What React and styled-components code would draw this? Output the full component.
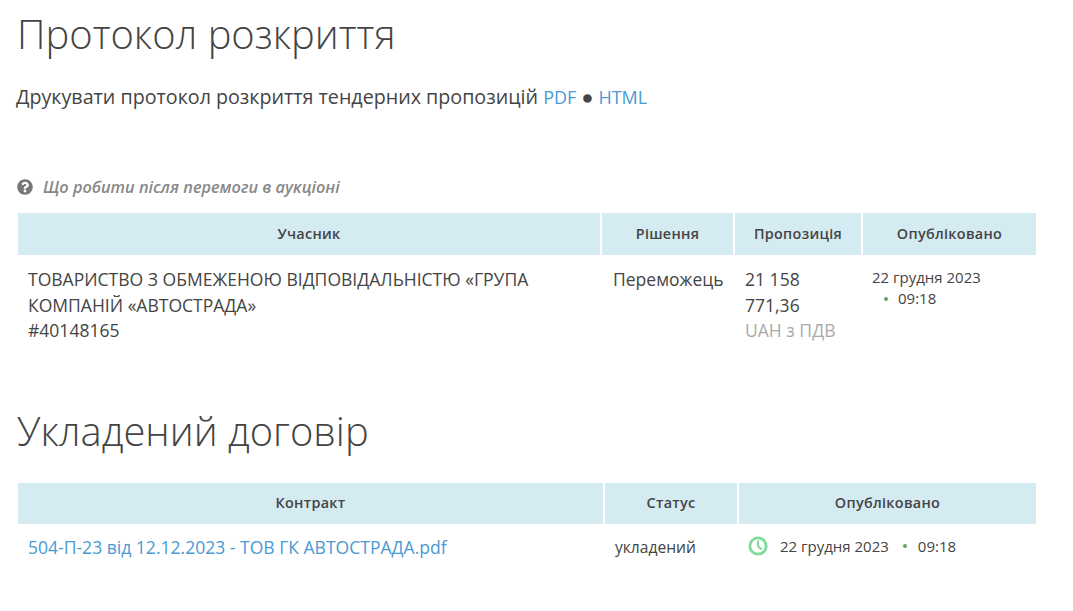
import styled, { createGlobalStyle } from "styled-components";
import { FaQuestionCircle } from "react-icons/fa";

const GlobalStyle = createGlobalStyle`
  html, body {
    margin: 0;
    padding: 0;
    background: #fff;
    color: #444;
    font-family: "Open Sans", sans-serif;
  }
`;

const Page = styled.div`
  width: 1073px;
  height: 611px;
  overflow: hidden;
  box-sizing: border-box;
  padding: 9px 37px 0 17px;
`;

const Heading = styled.h1`
  margin: 0;
  font-size: 39.9px;
  line-height: 50px;
  font-weight: 300;
  color: #444;
`;

const PrintLine = styled.p`
  margin: 25px 0 0 -1px;
  font-size: 19.68px;
  line-height: 25px;
  color: #444;
`;

const Link = styled.a`
  color: #4a9ad4;
  text-decoration: none;
`;

const PrintLink = styled(Link)`
  font-size: 18px;
`;

const Hint = styled.div`
  display: flex;
  align-items: center;
  gap: 10px;
  margin: 66px 0 0;
  font-size: 16.3px;
  line-height: 22px;
  font-style: italic;
  font-weight: 600;
  color: #888;

  svg {
    color: #777;
    font-size: 16px;
    flex: none;
  }
`;

const Table = styled.div`
  margin: 15px 0 0 1px;
  width: 1018px;
  display: grid;
  grid-template-columns: ${(props) => props.$columns};
  column-gap: 2px;
`;

const HeadCell = styled.div`
  background: #d5ebf2;
  height: ${(props) => props.$height}px;
  display: flex;
  align-items: center;
  justify-content: center;
  font-size: 14.4px;
  line-height: 20px;
  font-weight: 600;
  letter-spacing: 0.3px;
  color: #444;
`;

const Cell = styled.div`
  padding: ${(props) => props.$top || 12}px 10px 0 ${(props) => props.$left || 10}px;
  font-size: 17.55px;
  line-height: 25.5px;
  color: #444;
`;

const Muted = styled.div`
  color: #aaa;
`;

const DateBlock = styled.div`
  padding: 12px 10px 0 9px;
  font-size: 15px;
  line-height: 21px;
  color: #444;
`;

const TimeRow = styled.div`
  display: flex;
  align-items: center;
  padding-left: 12px;
`;

const Dot = styled.span`
  width: 4px;
  height: 4px;
  border-radius: 50%;
  background: #5fa55f;
  margin: 0 ${(props) => props.$right}px 0 ${(props) => props.$left}px;
  flex: none;
`;

const SecondHeading = styled(Heading)`
  margin-top: 62px;
`;

const ContractTable = styled(Table)`
  margin-top: 27px;
`;

const StatusCell = styled(Cell)`
  font-size: 15.6px;
`;

const ContractDate = styled.div`
  display: flex;
  align-items: center;
  padding: 10px 10px 0 9px;
  height: 25px;
  font-size: 15px;
  line-height: 25px;
  color: #444;
`;

const ClockIcon = styled.svg`
  width: 20px;
  height: 20px;
  margin-right: 12px;
  flex: none;
`;

const App = () => {
  return (
    <>
      <GlobalStyle />
      <Page>
        <Heading>Протокол розкриття</Heading>
        <PrintLine>
          Друкувати протокол розкриття тендерних пропозицій <PrintLink>PDF</PrintLink> ● <PrintLink>HTML</PrintLink>
        </PrintLine>
        <Hint>
          <FaQuestionCircle />
          Що робити після перемоги в аукціоні
        </Hint>
        <Table $columns="582px 131px 126px 173px">
          <HeadCell $height={42}>Учасник</HeadCell>
          <HeadCell $height={42}>Рішення</HeadCell>
          <HeadCell $height={42}>Пропозиція</HeadCell>
          <HeadCell $height={42}>Опубліковано</HeadCell>
          <Cell>
            ТОВАРИСТВО З ОБМЕЖЕНОЮ ВІДПОВІДАЛЬНІСТЮ «ГРУПА КОМПАНІЙ «АВТОСТРАДА»
            <br />
            #40148165
          </Cell>
          <Cell $left={11}>Переможець</Cell>
          <Cell>
            21 158 771,36
            <Muted>UAH з ПДВ</Muted>
          </Cell>
          <DateBlock>
            22 грудня 2023
            <TimeRow>
              <Dot $left={0} $right={10} />
              09:18
            </TimeRow>
          </DateBlock>
        </Table>
        <SecondHeading>Укладений договір</SecondHeading>
        <ContractTable $columns="585px 132px 297px">
          <HeadCell $height={41}>Контракт</HeadCell>
          <HeadCell $height={41}>Статус</HeadCell>
          <HeadCell $height={41}>Опубліковано</HeadCell>
          <Cell $top={11}>
            <Link>504-П-23 від 12.12.2023 - ТОВ ГК АВТОСТРАДА.pdf</Link>
          </Cell>
          <StatusCell $top={11}>укладений</StatusCell>
          <ContractDate>
            <ClockIcon viewBox="0 0 24 24" fill="none" stroke="#7fdc9a" strokeWidth="3.4" strokeLinecap="round" strokeLinejoin="round">
              <circle cx="12" cy="12" r="9.8" />
              <path d="M12 6.5V12.5L15.5 15.5" strokeWidth="2.6" />
            </ClockIcon>
            22 грудня 2023
            <Dot $left={14} $right={11} />
            09:18
          </ContractDate>
        </ContractTable>
      </Page>
    </>
  );
};

export default App;
